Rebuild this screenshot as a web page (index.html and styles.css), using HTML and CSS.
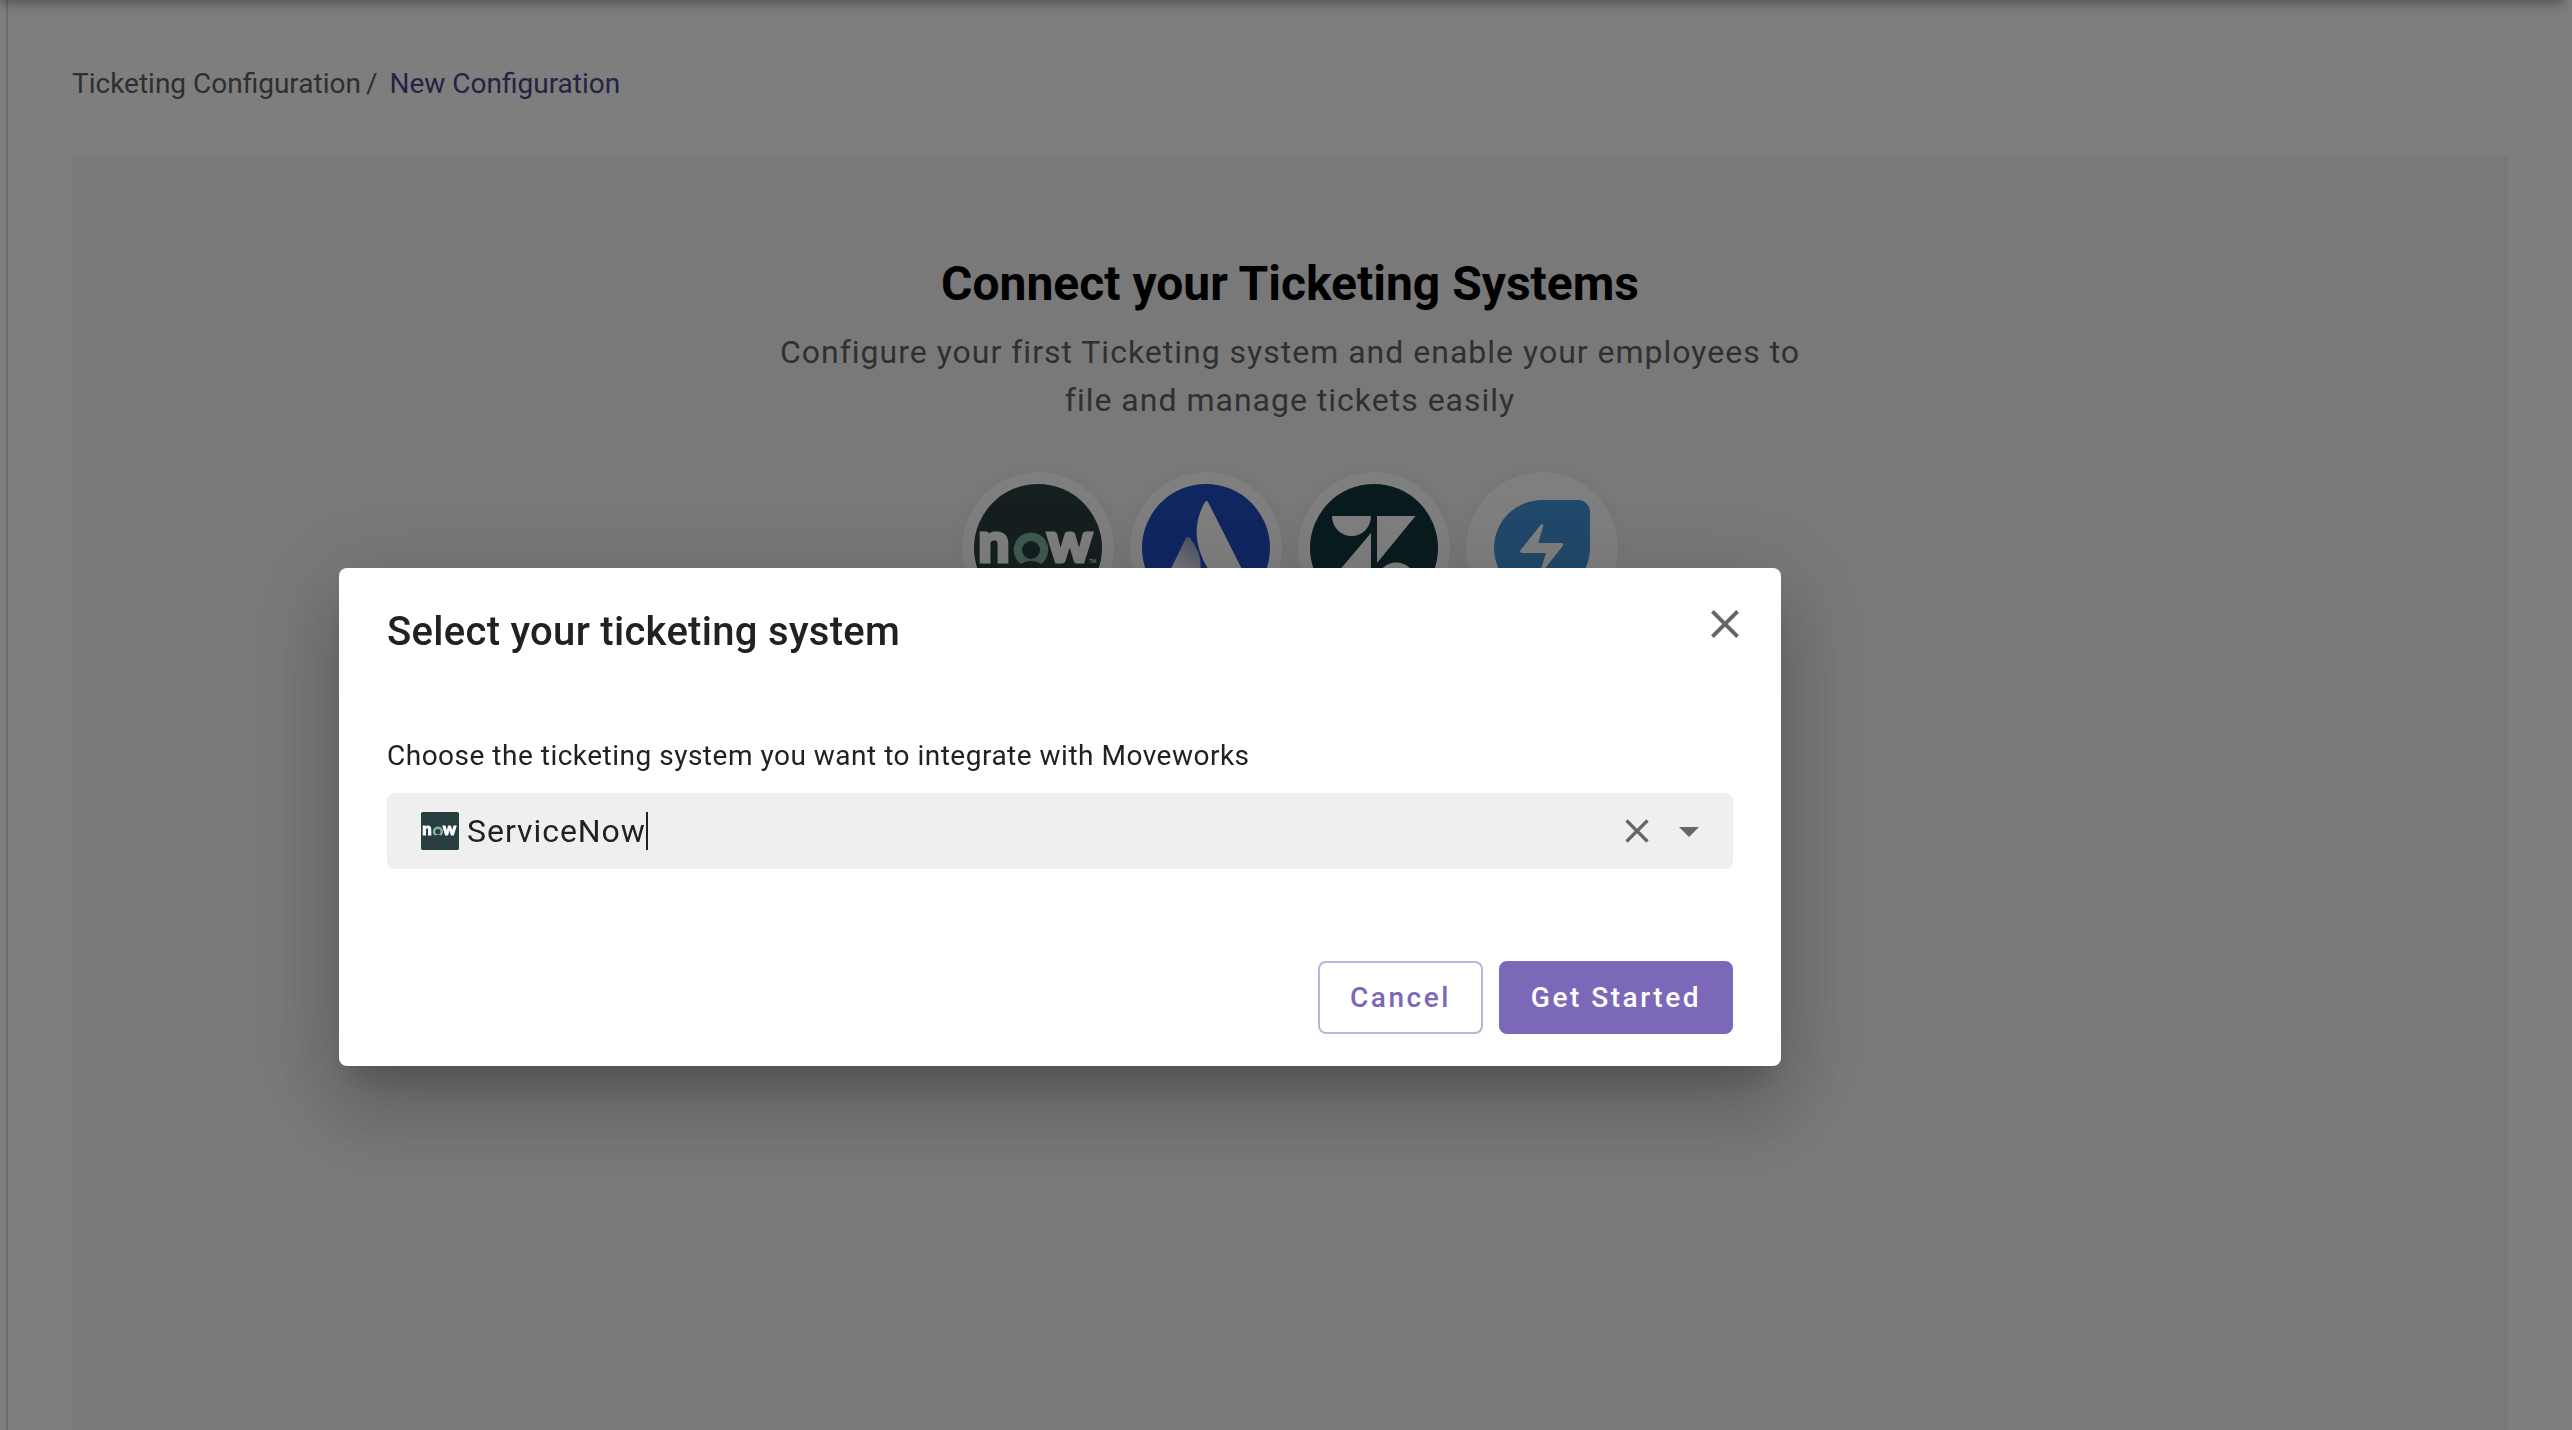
FILE: index.html
```html
<!DOCTYPE html>
<html lang="en">
<head>
  <meta charset="UTF-8" />
  <title>Ticketing Configuration</title>
  <meta name="viewport" content="width=device-width, initial-scale=1" />
  <link rel="stylesheet" href="styles.css">
</head>
<body>

<main class="page">
  <nav class="breadcrumb">
    <a href="#">Ticketing Configuration</a>
    <span class="separator">/</span>
    <a href="#" class="current">New Configuration</a>
  </nav>

  <section class="panel">
    <h1>Connect your Ticketing Systems</h1>
    <p>Configure your first Ticketing system and enable your employees to file and manage tickets easily</p>

    <div class="logos">
      <div class="logo">
        <svg viewBox="0 0 128 128">
          <circle cx="64" cy="64" r="64" fill="#293e40"/>
          <text class="now-text" x="4" y="78">n</text>
          <path d="M47 80a17.300 17.300 0 1 1 20 0q-4-3-10-3t-10 3z" fill="#81b5a1"/>
          <circle cx="57" cy="66" r="9" fill="#293e40"/>
          <text class="now-text" x="73" y="78">w</text>
          <text class="now-tm" x="115" y="79">TM</text>
        </svg>
      </div>
      <div class="logo">
        <svg viewBox="0 0 128 128">
          <defs>
            <linearGradient id="sail" x1="0.8" y1="0" x2="0.3" y2="1">
              <stop offset="0" stop-color="#8f9fc8"/>
              <stop offset="0.8" stop-color="#fff"/>
            </linearGradient>
          </defs>
          <circle cx="64" cy="64" r="64" fill="#204dc0"/>
          <path d="M63 18Q64.500 16 66 18L108 101H76C74 97 69 91 65 83C56 68 48 44 63 18z" fill="#fff"/>
          <path d="M44 54Q46 52 48 54C60 70 62 84 53 101H21z" fill="url(#sail)"/>
        </svg>
      </div>
      <div class="logo">
        <svg viewBox="0 0 128 128">
          <circle cx="64" cy="64" r="64" fill="#14363d"/>
          <g fill="#fff">
            <path d="M22 32h39a19.500 20 0 0 1-39 0z"/>
            <path d="M67 32h38.500L67 79z"/>
            <path d="M61 49v46H22z"/>
            <path d="M67 95a19.500 19.500 0 0 1 38.500 0z"/>
          </g>
        </svg>
      </div>
      <div class="logo">
        <svg viewBox="0 0 128 128">
          <path d="M64 16h36a12 12 0 0 1 12 12v36a48 48 0 1 1-48-48z" fill="#4292d6"/>
          <path d="M63 40.500q2-1 2.300 1L60.300 59H84q2 1 .7 3L65 87q-2 1-2.300-1L68 69H43.500q-2-1-1-3z" fill="#fff"/>
        </svg>
      </div>
    </div>
  </section>
</main>

<div class="backdrop">
  <div class="dialog" role="dialog" aria-modal="true" aria-labelledby="dialogTitle">
    <div class="dialog-header">
      <h2 id="dialogTitle">Select your ticketing system</h2>
      <button type="button" class="icon-btn close" aria-label="Close">
        <svg viewBox="0 0 24 24"><path d="M19 6.410L17.590 5 12 10.590 6.410 5 5 6.410 10.590 12 5 17.590 6.410 19 12 13.410 17.590 19 19 17.590 13.410 12z"/></svg>
      </button>
    </div>

    <label for="system">Choose the ticketing system you want to integrate with Moveworks</label>
    <div class="field">
      <svg class="field-logo" viewBox="0 0 128 128">
        <rect width="128" height="128" rx="6" fill="#293e40"/>
        <text class="now-text" x="4" y="78">n</text>
        <path d="M47 80a17.300 17.300 0 1 1 20 0q-4-3-10-3t-10 3z" fill="#81b5a1"/>
        <circle cx="57" cy="66" r="9" fill="#293e40"/>
        <text class="now-text" x="73" y="78">w</text>
      </svg>
      <input type="text" id="system" value="ServiceNow" />
      <span class="caret"></span>
      <button type="button" class="icon-btn clear" aria-label="Clear">
        <svg viewBox="0 0 24 24"><path d="M19 6.410L17.590 5 12 10.590 6.410 5 5 6.410 10.590 12 5 17.590 6.410 19 12 13.410 17.590 19 19 17.590 13.410 12z"/></svg>
      </button>
      <button type="button" class="icon-btn open" aria-label="Open">
        <svg viewBox="0 0 24 24"><path d="M7 10l5 5 5-5z"/></svg>
      </button>
    </div>

    <div class="actions">
      <button type="button" class="btn btn-outline">Cancel</button>
      <button type="button" class="btn btn-primary">Get Started</button>
    </div>
  </div>
</div>

</body>
</html>
```
FILE: styles.css
```css
* {
  box-sizing: border-box;
}
body {
  margin: 0;
  font-family: Roboto, sans-serif;
  font-size: 28px;
  line-height: 40px;
  background: #fcfcfc;
  overflow: hidden;
}
/* shadow of the app bar above the page */
body::before {
  content: "";
  position: absolute;
  top: -22px;
  left: 0;
  right: 8px;
  height: 20px;
  box-shadow: 0 4px 8px -2px rgba(0,0,0,0.2), 0 8px 10px rgba(0,0,0,0.14), 0 2px 20px rgba(0,0,0,0.12);
}
.page {
  display: flex;
  flex-direction: column;
  min-height: 100vh;
  margin-left: 6px;
  padding: 64px 64px 0;
  border-left: 2px solid #dadada;
}
.breadcrumb {
  display: flex;
  margin-bottom: 52px;
  color: #5e5e5e;
}
.breadcrumb a {
  color: #5e5e5e;
  text-decoration: none;
}
.breadcrumb .separator {
  margin: 0 12px 0 5px;
}
.breadcrumb .current {
  color: #4b4687;
}
.panel {
  flex: 1;
  padding: 100px 48px;
  background: #f3f3f3;
  text-align: center;
}
.panel h1 {
  margin: 0 0 16px;
  font-size: 48px;
  line-height: 56px;
  font-weight: 700;
  color: #000;
}
.panel p {
  max-width: 1060px;
  margin: 0 auto 48px;
  font-size: 32px;
  line-height: 48px;
  letter-spacing: 1px;
  color: #616161;
}
.logos {
  display: flex;
  justify-content: center;
  gap: 16px;
}
.logo {
  width: 152px;
  height: 152px;
  padding: 12px;
  border-radius: 50%;
  background: #fff;
  box-shadow: 0 0 20px rgba(0,0,0,0.06);
}
.logo svg {
  display: block;
}
.now-text {
  font-family: Lato, sans-serif;
  font-size: 56px;
  font-weight: 900;
  fill: #fff;
  stroke: #fff;
  stroke-width: 3px;
}
.now-tm {
  font-size: 5px;
  fill: #fff;
}
.backdrop {
  position: fixed;
  inset: 0;
  background: rgba(0,0,0,0.5);
}
.dialog {
  position: absolute;
  top: 568px;
  left: 339px;
  width: 1442px;
  max-width: 90%;
  padding: 32px 48px;
  border-radius: 8px;
  background: #fff;
  color: #212121;
  box-shadow: 0 22px 30px -14px rgba(0,0,0,0.2), 0 48px 76px 6px rgba(0,0,0,0.14), 0 18px 92px 16px rgba(0,0,0,0.12);
}
.dialog-header {
  display: flex;
  justify-content: space-between;
  align-items: flex-start;
  margin-bottom: 72px;
}
.dialog-header h2 {
  margin: 0;
  font-size: 40px;
  line-height: 64px;
  font-weight: 500;
  letter-spacing: 0.0075em;
}
.icon-btn {
  display: flex;
  padding: 0;
  border: none;
  background: none;
  cursor: pointer;
}
.icon-btn svg {
  width: 48px;
  height: 48px;
  fill: #666;
}
.close {
  margin-right: -16px;
}
.dialog label {
  display: block;
  margin-bottom: 17px;
  letter-spacing: 0.0179em;
}
.field {
  display: flex;
  align-items: center;
  height: 76px;
  margin-bottom: 92px;
  padding: 0 20px 0 34px;
  border-radius: 8px;
  background: #efefef;
}
.field-logo {
  width: 38px;
  height: 38px;
  margin-right: 8px;
}
.field input {
  field-sizing: content;
  padding: 0;
  border: none;
  outline: none;
  background: none;
  font-family: inherit;
  font-size: 32px;
  letter-spacing: 0.03em;
  color: #212121;
}
.caret {
  width: 2px;
  height: 38px;
  background: #212121;
}
.clear {
  margin-left: auto;
}
.clear svg {
  width: 40px;
  height: 40px;
}
.open {
  margin-left: 8px;
}
.actions {
  display: flex;
  justify-content: flex-end;
  gap: 16px;
}
.btn {
  height: 73px;
  padding: 0 30px;
  border: 2px solid #7b68b8;
  border-radius: 8px;
  font-family: inherit;
  font-size: 28px;
  font-weight: 500;
  letter-spacing: 0.09em;
  cursor: pointer;
}
.btn-outline {
  border-color: #bdb3dc;
  background: #fff;
  color: #7b68b8;
}
.btn-primary {
  background: #7b68b8;
  color: #fff;
}
```
